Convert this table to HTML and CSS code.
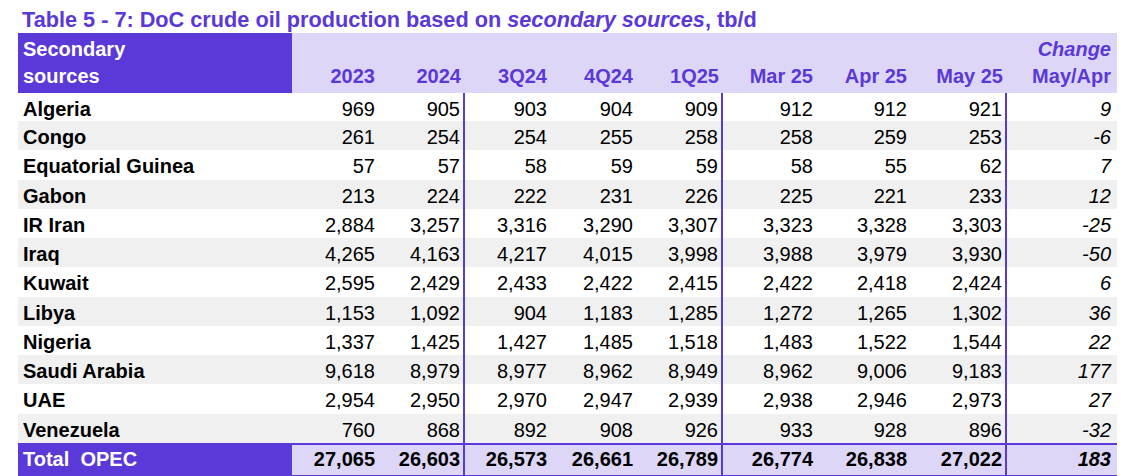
FILE: index.html
```html
<!DOCTYPE html>
<html>
<head>
<meta charset="utf-8">
<link rel="stylesheet" href="styles.css">
</head>
<body>
<div class="page">
  <h1 class="title">Table 5 - 7: DoC crude oil production based on <i>secondary sources</i>, tb/d</h1>
  <table class="data">
    <colgroup>
      <col class="c-label">
      <col class="c-q"><col class="c-q"><col class="c-q"><col class="c-q"><col class="c-q">
      <col class="c-m"><col class="c-m"><col class="c-m3">
      <col class="c-chg">
    </colgroup>
    <thead>
      <tr>
        <th class="h-label">Secondary<br>sources</th>
        <th>2023</th>
        <th>2024</th>
        <th>3Q24</th>
        <th>4Q24</th>
        <th>1Q25</th>
        <th>Mar 25</th>
        <th>Apr 25</th>
        <th>May 25</th>
        <th class="h-chg"><i>Change</i><br>May/Apr</th>
      </tr>
    </thead>
    <tbody>
      <tr class="first"><td class="lbl">Algeria</td><td>969</td><td>905</td><td class="sep">903</td><td>904</td><td>909</td><td class="sep">912</td><td>912</td><td>921</td><td class="sep chg">9</td></tr>
      <tr class="alt"><td class="lbl">Congo</td><td>261</td><td>254</td><td class="sep">254</td><td>255</td><td>258</td><td class="sep">258</td><td>259</td><td>253</td><td class="sep chg">-6</td></tr>
      <tr><td class="lbl">Equatorial Guinea</td><td>57</td><td>57</td><td class="sep">58</td><td>59</td><td>59</td><td class="sep">58</td><td>55</td><td>62</td><td class="sep chg">7</td></tr>
      <tr class="alt"><td class="lbl">Gabon</td><td>213</td><td>224</td><td class="sep">222</td><td>231</td><td>226</td><td class="sep">225</td><td>221</td><td>233</td><td class="sep chg">12</td></tr>
      <tr><td class="lbl">IR Iran</td><td>2,884</td><td>3,257</td><td class="sep">3,316</td><td>3,290</td><td>3,307</td><td class="sep">3,323</td><td>3,328</td><td>3,303</td><td class="sep chg">-25</td></tr>
      <tr class="alt"><td class="lbl">Iraq</td><td>4,265</td><td>4,163</td><td class="sep">4,217</td><td>4,015</td><td>3,998</td><td class="sep">3,988</td><td>3,979</td><td>3,930</td><td class="sep chg">-50</td></tr>
      <tr><td class="lbl">Kuwait</td><td>2,595</td><td>2,429</td><td class="sep">2,433</td><td>2,422</td><td>2,415</td><td class="sep">2,422</td><td>2,418</td><td>2,424</td><td class="sep chg">6</td></tr>
      <tr class="alt"><td class="lbl">Libya</td><td>1,153</td><td>1,092</td><td class="sep">904</td><td>1,183</td><td>1,285</td><td class="sep">1,272</td><td>1,265</td><td>1,302</td><td class="sep chg">36</td></tr>
      <tr><td class="lbl">Nigeria</td><td>1,337</td><td>1,425</td><td class="sep">1,427</td><td>1,485</td><td>1,518</td><td class="sep">1,483</td><td>1,522</td><td>1,544</td><td class="sep chg">22</td></tr>
      <tr class="alt"><td class="lbl">Saudi Arabia</td><td>9,618</td><td>8,979</td><td class="sep">8,977</td><td>8,962</td><td>8,949</td><td class="sep">8,962</td><td>9,006</td><td>9,183</td><td class="sep chg">177</td></tr>
      <tr><td class="lbl">UAE</td><td>2,954</td><td>2,950</td><td class="sep">2,970</td><td>2,947</td><td>2,939</td><td class="sep">2,938</td><td>2,946</td><td>2,973</td><td class="sep chg">27</td></tr>
      <tr class="alt"><td class="lbl">Venezuela</td><td>760</td><td>868</td><td class="sep">892</td><td>908</td><td>926</td><td class="sep">933</td><td>928</td><td>896</td><td class="sep chg">-32</td></tr>
      <tr class="total"><td class="lbl">Total&nbsp; OPEC</td><td>27,065</td><td>26,603</td><td class="sep">26,573</td><td>26,661</td><td>26,789</td><td class="sep">26,774</td><td>26,838</td><td>27,022</td><td class="sep chg">183</td></tr>
    </tbody>
  </table>
</div>
</body>
</html>
```

FILE: styles.css
```css
html, body {
  margin: 0;
  padding: 0;
  background: #ffffff;
}

.page {
  padding-left: 18px;
  font-family: "Liberation Sans", Arial, sans-serif;
  font-size: 20px;
  color: #000;
}

.title {
  margin: 0;
  height: 33px;
  box-sizing: border-box;
  padding: 7px 0 0 4px;
  font-size: 21.7px;
  line-height: 25px;
  font-weight: bold;
  color: #5b38d8;
  white-space: nowrap;
}

.data {
  border-collapse: collapse;
  table-layout: fixed;
  width: 1099px;
}

.c-label { width: 274px; }
.c-q { width: 86px; }
.c-m { width: 94px; }
.c-m3 { width: 96px; }
.c-chg { width: 111px; }

.data th {
  background: #ddd6f6;
  color: #5b38d8;
  font-weight: bold;
  text-align: right;
  vertical-align: bottom;
  height: 57px;
  padding: 0 3px 3px 0;
  line-height: 27px;
  white-space: nowrap;
}

.data th.h-label {
  background: #5b38d8;
  color: #fff;
  text-align: left;
  padding-left: 5px;
}

.data th.h-chg {
  padding-right: 6px;
}

.data td {
  padding: 5px 3px 1.27px 0;
  line-height: 23px;
  text-align: right;
  white-space: nowrap;
}

.data tr.first td {
  padding-top: 5px;
  padding-bottom: 0;
}

.data td.lbl {
  text-align: left;
  font-weight: bold;
  padding-left: 5px;
}

.data td.sep {
  border-left: 2px solid #5b38d8;
}

.data td.chg {
  font-style: italic;
  padding-right: 6px;
}

.data tr.alt td {
  background: #f0f0f0;
}

.data tr.total td {
  background: #ddd6f6;
  font-weight: bold;
  border-top: 2px solid #5b38d8;
  border-bottom: 2px solid #5b38d8;
  padding-top: 3px;
  padding-bottom: 4px;
}

.data tr.total td.lbl {
  background: #5b38d8;
  color: #fff;
}
```
